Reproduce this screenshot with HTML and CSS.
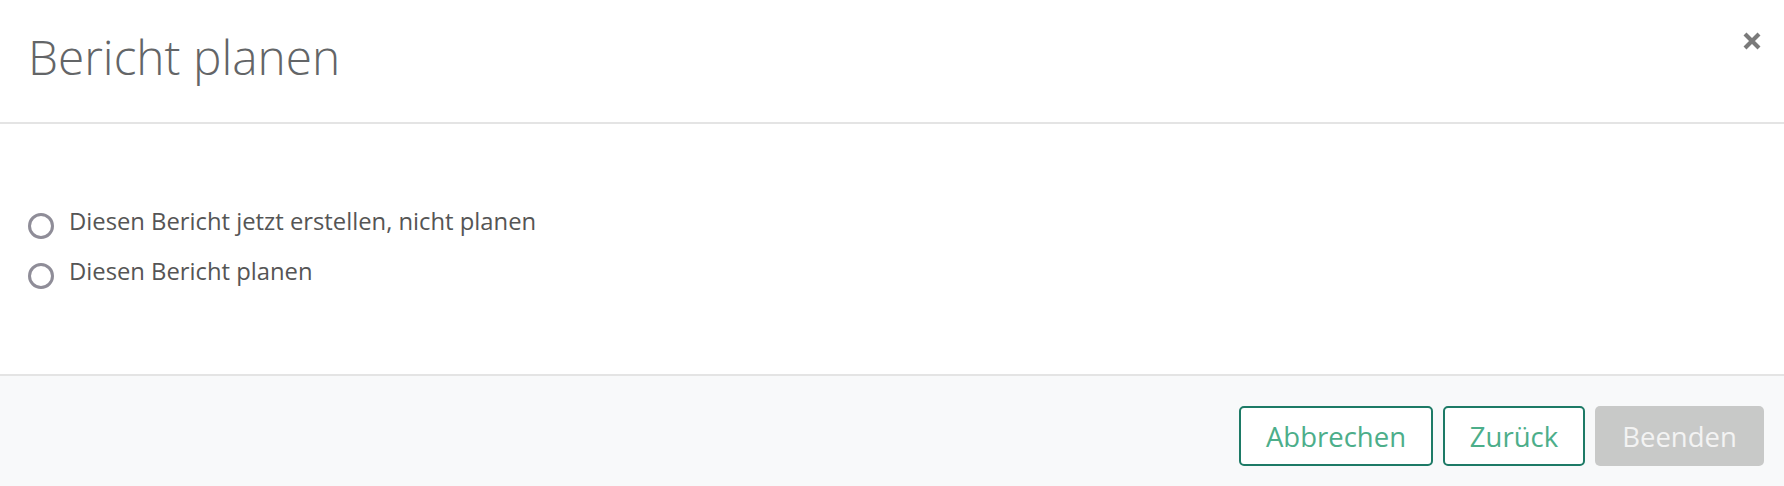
FILE: index.html
```html
<!DOCTYPE html>
<html lang="de">
<head>
<meta charset="utf-8">
<title>Bericht planen</title>
<link rel="stylesheet" href="styles.css">
</head>
<body>
<div class="modal">
  <header class="modal-header">
    <h1 class="modal-title">Bericht planen</h1>
    <button class="close" aria-label="Schließen">
      <svg width="20" height="20" viewBox="0 0 20 20"><path d="M3 3 L17 17 M17 3 L3 17" stroke="#7a7a7a" stroke-width="4.2" stroke-linecap="butt"/></svg>
    </button>
  </header>
  <main class="modal-body">
    <label class="radio-row"><span class="radio"></span><span class="radio-label">Diesen Bericht jetzt erstellen, nicht planen</span></label>
    <label class="radio-row"><span class="radio"></span><span class="radio-label">Diesen Bericht planen</span></label>
  </main>
  <footer class="modal-footer">
    <button class="btn btn-outline btn-cancel">Abbrechen</button>
    <button class="btn btn-outline btn-back">Zurück</button>
    <button class="btn btn-disabled btn-finish">Beenden</button>
  </footer>
</div>
</body>
</html>
```
FILE: styles.css
```css
* { box-sizing: border-box; }
html, body { margin: 0; padding: 0; background: #fff; }
body { font-family: "Open Sans", "Noto Sans", sans-serif; }

.modal { width: 1784px; height: 486px; display: flex; flex-direction: column; }

.modal-header {
  height: 124px;
  border-bottom: 2px solid #e4e4e4;
  display: flex;
  align-items: flex-start;
  justify-content: space-between;
  padding: 0 22px 0 28px;
}
.modal-title {
  margin: 0;
  padding-top: 26px;
  font-size: 47.8px;
  font-weight: 300;
  color: #636567;
  line-height: 1.3;
}
.close {
  border: 0;
  background: none;
  padding: 0;
  margin-top: 31px;
  width: 20px;
  height: 20px;
  cursor: pointer;
}
.close svg { display: block; }

.modal-body {
  height: 250px;
  display: flex;
  flex-direction: column;
  justify-content: center;
  gap: 20px;
  padding: 0 28px 6px;
}
.radio-row { display: flex; align-items: center; gap: 15px; height: 30px; }
.radio {
  width: 26px; height: 26px;
  border: 3px solid #8f8d98;
  border-radius: 50%;
  flex: none;
  transform: translateY(5px);
}
.radio-label { font-size: 23.8px; color: #555; line-height: 30px; }

.modal-footer {
  flex: 1;
  border-top: 2px solid #e4e4e4;
  background: #f8f9fa;
  display: flex;
  justify-content: flex-end;
  align-items: flex-start;
  gap: 10px;
  padding: 30px 20px 0 0;
}
.btn {
  height: 60px;
  font-family: "Open Sans", "Noto Sans", sans-serif;
  font-size: 27.5px;
  border-radius: 5px;
  padding: 0;
}
.btn-outline { background: #fff; border: 2px solid #1d7a66; color: #4cae8a; }
.btn-cancel { width: 194px; }
.btn-back { width: 142px; }
.btn-disabled { background: #c8c9c8; border: 0; color: #f3f3f3; width: 169px; }
```
